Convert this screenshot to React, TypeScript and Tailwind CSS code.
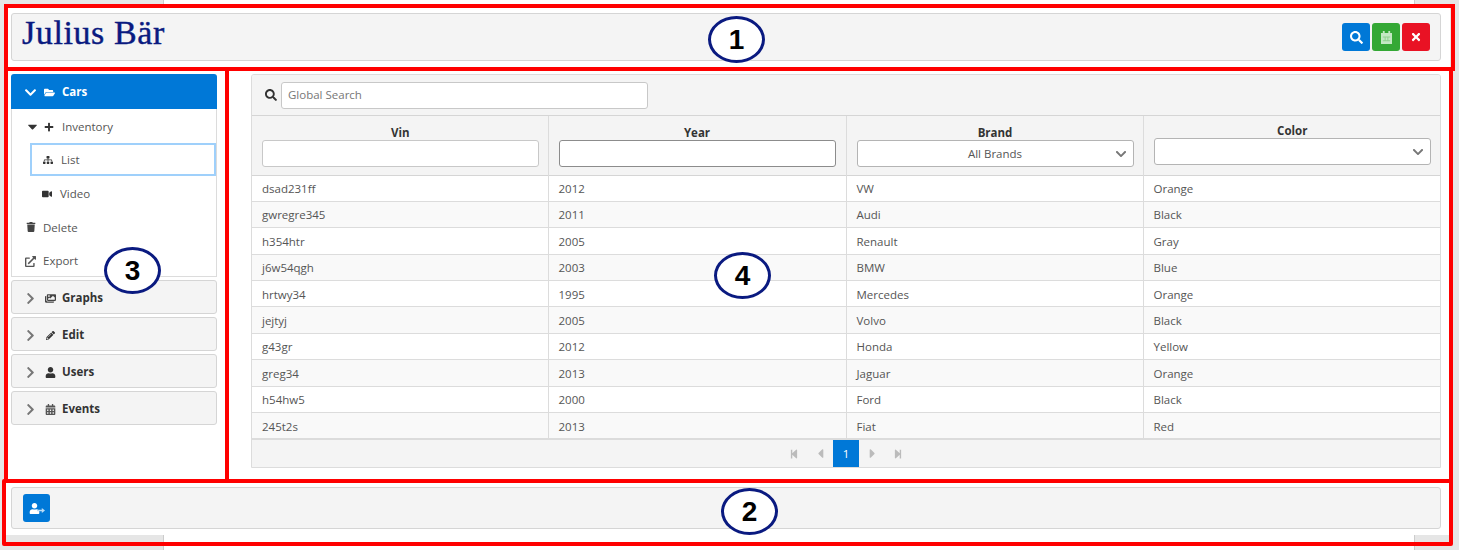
import type { ReactNode } from 'react';
import {
  FaCalendarAlt,
  FaChevronDown,
  FaChevronRight,
  FaFolderOpen,
  FaImages,
  FaPencilAlt,
  FaPlus,
  FaSearch,
  FaSitemap,
  FaStepBackward,
  FaStepForward,
  FaTimes,
  FaTrash,
  FaUser,
  FaVideo,
  FaCaretDown,
  FaCaretLeft,
  FaCaretRight,
  FaExternalLinkAlt,
} from 'react-icons/fa';

const rows = [
  ['dsad231ff', '2012', 'VW', 'Orange'],
  ['gwregre345', '2011', 'Audi', 'Black'],
  ['h354htr', '2005', 'Renault', 'Gray'],
  ['j6w54qgh', '2003', 'BMW', 'Blue'],
  ['hrtwy34', '1995', 'Mercedes', 'Orange'],
  ['jejtyj', '2005', 'Volvo', 'Black'],
  ['g43gr', '2012', 'Honda', 'Yellow'],
  ['greg34', '2013', 'Jaguar', 'Orange'],
  ['h54hw5', '2000', 'Ford', 'Black'],
  ['245t2s', '2013', 'Fiat', 'Red'],
];

function ClosedSection({ icon, label }: { icon: ReactNode; label: string }) {
  return (
    <div className="flex h-[34px] items-center rounded-[3px] border border-[#d5d5d5] bg-[#f4f4f4] pt-[2px] font-bold text-[#333]">
      <FaChevronRight className="ml-[12px] text-[13px] text-[#777]" />
      <span className="ml-[5px] flex w-[16px] justify-center text-[11px]">{icon}</span>
      <span className="ml-[4px]">{label}</span>
    </div>
  );
}

function MenuRow({ icon, label, className }: { icon: ReactNode; label: string; className?: string }) {
  return (
    <div className={`flex items-center pt-[1px] text-[#555] ${className ?? ''}`}>
      {icon}
      <span>{label}</span>
    </div>
  );
}

function Sidebar() {
  return (
    <aside className="flex w-[206px] shrink-0 flex-col">
      <div className="flex h-[35px] items-center rounded-t-[3px] bg-[#0078d7] pt-[1px] font-bold text-white">
        <FaChevronDown className="ml-[13px] text-[13px]" />
        <FaFolderOpen className="ml-[7px] text-[11px]" />
        <span className="ml-[7px]">Cars</span>
      </div>
      <div className="flex h-[168px] flex-col border-x border-b border-[#dcdcdc] bg-white">
        <MenuRow
          className="mt-[1px] h-[33px]"
          icon={
            <>
              <FaCaretDown className="ml-[13px] text-[15px] text-[#333]" />
              <FaPlus className="ml-[4px] mr-[8px] text-[10px] text-[#333]" />
            </>
          }
          label="Inventory"
        />
        <MenuRow
          className="ml-[18px] h-[33px] border-2 border-[#9fd0fb]"
          icon={<FaSitemap className="ml-[11px] mr-[8px] text-[10px] text-[#333]" />}
          label="List"
        />
        <MenuRow
          className="h-[35px]"
          icon={<FaVideo className="ml-[30px] mr-[8px] text-[10px] text-[#333]" />}
          label="Video"
        />
        <MenuRow
          className="h-[33px]"
          icon={<FaTrash className="ml-[14px] mr-[7px] text-[10px] text-[#444]" />}
          label="Delete"
        />
        <MenuRow
          className="h-[33px] pt-[3px]"
          icon={<FaExternalLinkAlt className="ml-[13px] mr-[7px] text-[11px] text-[#555]" />}
          label="Export"
        />
      </div>
      <div className="mt-[3px] flex flex-col gap-[3px]">
        <ClosedSection icon={<FaImages className="text-[#444]" />} label="Graphs" />
        <ClosedSection icon={<FaPencilAlt className="text-[9px] text-[#333]" />} label="Edit" />
        <ClosedSection icon={<FaUser className="text-[#333]" />} label="Users" />
        <ClosedSection icon={<FaCalendarAlt className="text-[#555]" />} label="Events" />
      </div>
    </aside>
  );
}

function SelectBox({ label }: { label?: string }) {
  return (
    <div className="relative flex h-[27px] items-center justify-center rounded-[3px] border border-[#b4b4b4] bg-white font-normal text-[#555]">
      {label}
      <FaChevronDown className="absolute right-[6px] text-[12px] text-[#777]" />
    </div>
  );
}

function CarsTable() {
  return (
    <section className="ml-[34px] h-[394px] flex-1 overflow-hidden rounded-t-[3px] border border-[#dcdcdc]">
      <div className="flex h-[41px] items-center border-b border-[#d5d5d5] bg-[#f4f4f4]">
        <FaSearch className="ml-[13px] text-[12px] text-[#333]" />
        <input
          readOnly
          placeholder="Global Search"
          className="ml-[4px] h-[27px] w-[367px] rounded-[3px] border border-[#c8c8c8] bg-white px-[6px] pb-[2px] text-[11.5px] outline-none placeholder:text-[#777]"
        />
      </div>
      <table className="w-full table-fixed border-collapse">
        <thead>
          <tr className="h-[59px] border-b border-[#d5d5d5] bg-[#f4f4f4] text-[#333]">
            <th className="w-[296px] border-r border-[#dcdcdc] pl-[10px] pr-[9px] align-top">
              <div className="mt-[9px] leading-[15px]">Vin</div>
              <input readOnly className="block h-[27px] w-full rounded-[3px] border border-[#c8c8c8] bg-white" />
            </th>
            <th className="w-[298px] border-r border-[#dcdcdc] pl-[10px] pr-[10px] align-top">
              <div className="mt-[9px] leading-[15px]">Year</div>
              <input readOnly className="block h-[27px] w-full rounded-[3px] border border-[#8c8c8c] bg-white" />
            </th>
            <th className="w-[297px] border-r border-[#dcdcdc] pl-[10px] pr-[9px] align-top">
              <div className="mt-[9px] leading-[15px]">Brand</div>
              <SelectBox label="All Brands" />
            </th>
            <th className="pl-[10px] pr-[9px] align-top">
              <div className="mt-[7px] leading-[15px]">Color</div>
              <SelectBox />
            </th>
          </tr>
        </thead>
        <tbody>
          {rows.map((r, i) => (
            <tr key={r[0]} className={`h-[26.4px] border-b border-[#dcdcdc] text-[#555] ${i % 2 ? 'bg-[#f9f9f9]' : 'bg-white'}`}>
              {r.map((c, j) => (
                <td key={j} className={`px-[10px] pb-0 pt-[1px] ${j < 3 ? 'border-r border-[#dcdcdc]' : ''}`}>
                  {c}
                </td>
              ))}
            </tr>
          ))}
        </tbody>
      </table>
      <div className="flex h-[28px] items-end justify-center border-t border-[#dcdcdc] bg-[#f4f4f4] text-[#bbb]">
        <div className="flex h-[27px] w-[26px] items-center justify-center"><FaStepBackward className="text-[10px]" /></div>
        <div className="flex h-[27px] w-[26px] items-center justify-center"><FaCaretLeft className="text-[15px]" /></div>
        <div className="flex h-[27px] w-[26px] items-center justify-center bg-[#0078d7] text-white">1</div>
        <div className="flex h-[27px] w-[26px] items-center justify-center"><FaCaretRight className="text-[15px]" /></div>
        <div className="flex h-[27px] w-[26px] items-center justify-center"><FaStepForward className="text-[10px]" /></div>
      </div>
    </section>
  );
}

// numbered callout drawn over the screenshot
function Callout({ n, className }: { n: number; className: string }) {
  return (
    <div
      className={`absolute flex h-[47px] w-[57px] items-center justify-center rounded-[50%] border-[3px] border-[#0a1a80] bg-white font-['Liberation_Sans',sans-serif] text-[28px] font-bold text-black ${className}`}
    >
      {n}
    </div>
  );
}

export default function App() {
  return (
    <div className="relative h-[550px] w-[1459px] overflow-hidden bg-[#e6e6e6] font-['Open_Sans',sans-serif] text-[11.5px]">
      <div className="absolute inset-y-0 left-[163px] w-[1252px] border-x border-[#ccc] bg-white" />
      <div className="absolute left-[4px] right-[9px] top-[4px] bottom-[15px] bg-white" />

      <div className="relative flex flex-col pl-[11px] pr-[18px] pt-[13px]">
        <header className="flex h-[48px] items-center justify-between rounded-[3px] border border-[#d5d5d5] bg-[#f4f4f4] pl-[10px] pr-[10px]">
          <div className="mb-[8px] font-['Liberation_Serif',serif] text-[34px] leading-none tracking-[0.6px] text-[#0a1a80] [-webkit-text-stroke:0.4px_#0a1a80]">
            Julius Bär
          </div>
          <div className="flex gap-[2px]">
            <button className="flex h-[28px] w-[28px] items-center justify-center rounded-[3px] bg-[#0078d7] text-[13px] text-white">
              <FaSearch />
            </button>
            <button className="flex h-[28px] w-[28px] items-center justify-center rounded-[3px] bg-[#34a835]">
              <svg viewBox="0 0 12 14" className="h-[13px] w-[11px]">
                <path d="M0 2h2V0h2v2h4V0h2v2h2v12H0z" fill="#c4e8c4" />
                <path d="M2 6h8v1H2zM4 7h1v4H4zM7 7h1v4H7zM2 10h8v1H2z" fill="#8fd08f" />
              </svg>
            </button>
            <button className="flex h-[28px] w-[28px] items-center justify-center rounded-[3px] bg-[#e91224] text-[12px] text-white">
              <FaTimes />
            </button>
          </div>
        </header>

        <div className="mt-[13px] flex items-start">
          <Sidebar />
          <CarsTable />
        </div>

        <footer className="mt-[19px] flex h-[42px] items-center rounded-[3px] border border-[#d5d5d5] bg-[#f4f4f4] pl-[11px]">
          <button className="relative flex h-[28px] w-[27px] items-center justify-center rounded-[3px] bg-[#0078d7] text-white">
            <FaUser className="mr-[4px] text-[11px]" />
            <svg viewBox="0 0 10 8" className="absolute left-[14px] top-[13px] h-[7px] w-[8px]" fill="#bcdcf5">
              <path d="M0 3h6V1l4 3-4 3V5H0z" />
            </svg>
          </button>
        </footer>
      </div>

      {/* red annotation frames */}
      <div className="absolute left-[4px] top-[4px] h-[67px] w-[1451px] border-4 border-[#ff0000]" />
      <div className="absolute left-[4px] top-[67px] h-[416px] w-[225px] border-4 border-[#ff0000]" />
      <div className="absolute left-[225px] top-[67px] h-[416px] w-[1228px] border-4 border-[#ff0000]" />
      <div className="absolute left-[2px] top-[479px] h-[67px] w-[1451px] rounded-[2px] border-4 border-[#ff0000]" />

      <Callout n={1} className="left-[708px] top-[16px]" />
      <Callout n={2} className="left-[721px] top-[488px]" />
      <Callout n={3} className="left-[104px] top-[247px]" />
      <Callout n={4} className="left-[714px] top-[252px]" />
    </div>
  );
}
